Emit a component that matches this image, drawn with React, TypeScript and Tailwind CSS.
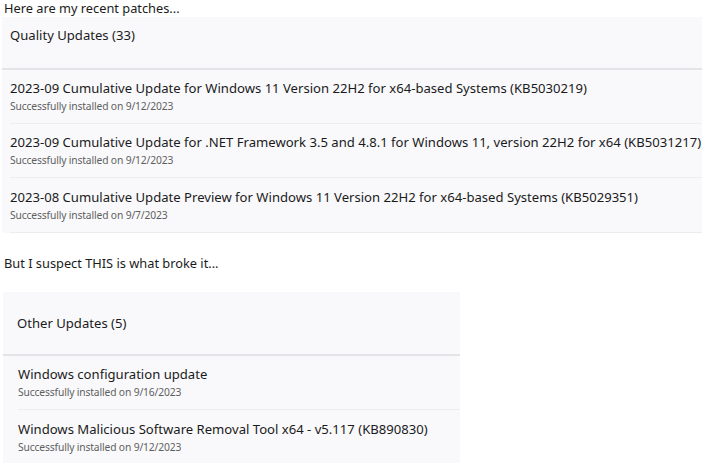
import React from "react";

const font = { fontFamily: '"Segoe UI", "Noto Sans", "Open Sans", sans-serif' };

function Row({ title, sub, h, last }: { title: string; sub: string; h: string; last?: boolean }) {
  return (
    <div className={"flex flex-col justify-center " + h + (last ? "" : " border-b border-[#ededf0]")}>
      <div className="text-[13.1px] leading-[19px] text-[#1b1b1b] whitespace-nowrap">{title}</div>
      <div className="text-[10.3px] tracking-[-0.15px] leading-[16px] text-[#5f5f5f] whitespace-nowrap">{sub}</div>
    </div>
  );
}

export default function App() {
  return (
    <div className="w-[702px] h-[463px] overflow-hidden bg-white text-[#1b1b1b]" style={font}>
      <div className="pl-[4px] h-[17px] text-[12.8px] leading-[16px]">Here are my recent patches...</div>
      <div className="ml-[2px] bg-[#f9f9fb]">
        <div className="h-[53px] pl-[8px] pt-[9px] text-[13.1px] leading-[18px] border-b-2 border-[#e3e3e8]">
          Quality Updates (33)
        </div>
        <div className="pl-[8px]">
          <Row
            h="h-[54px]"
            title="2023-09 Cumulative Update for Windows 11 Version 22H2 for x64-based Systems (KB5030219)"
            sub="Successfully installed on 9/12/2023"
          />
          <Row
            h="h-[54px]"
            title="2023-09 Cumulative Update for .NET Framework 3.5 and 4.8.1 for Windows 11, version 22H2 for x64 (KB5031217)"
            sub="Successfully installed on 9/12/2023"
          />
          <Row
            h="h-[55px]"
            title="2023-08 Cumulative Update Preview for Windows 11 Version 22H2 for x64-based Systems (KB5029351)"
            sub="Successfully installed on 9/7/2023"
          />
        </div>
      </div>
      <div className="h-[59px] flex items-center pl-[4px] text-[12.8px] leading-[16px]">
        But I suspect THIS is what broke it...
      </div>
      <div className="ml-[3px] w-[457px] bg-[#f9f9fb]">
        <div className="h-[64px] flex items-center pl-[14px] text-[13.1px] leading-[18px] border-b-2 border-[#e3e3e8]">
          Other Updates (5)
        </div>
        <div className="pl-[15px]">
          <Row h="h-[54px]" title="Windows configuration update" sub="Successfully installed on 9/16/2023" />
          <Row
            h="h-[54px]"
            title="Windows Malicious Software Removal Tool x64 - v5.117 (KB890830)"
            sub="Successfully installed on 9/12/2023"
            last
          />
        </div>
      </div>
    </div>
  );
}
